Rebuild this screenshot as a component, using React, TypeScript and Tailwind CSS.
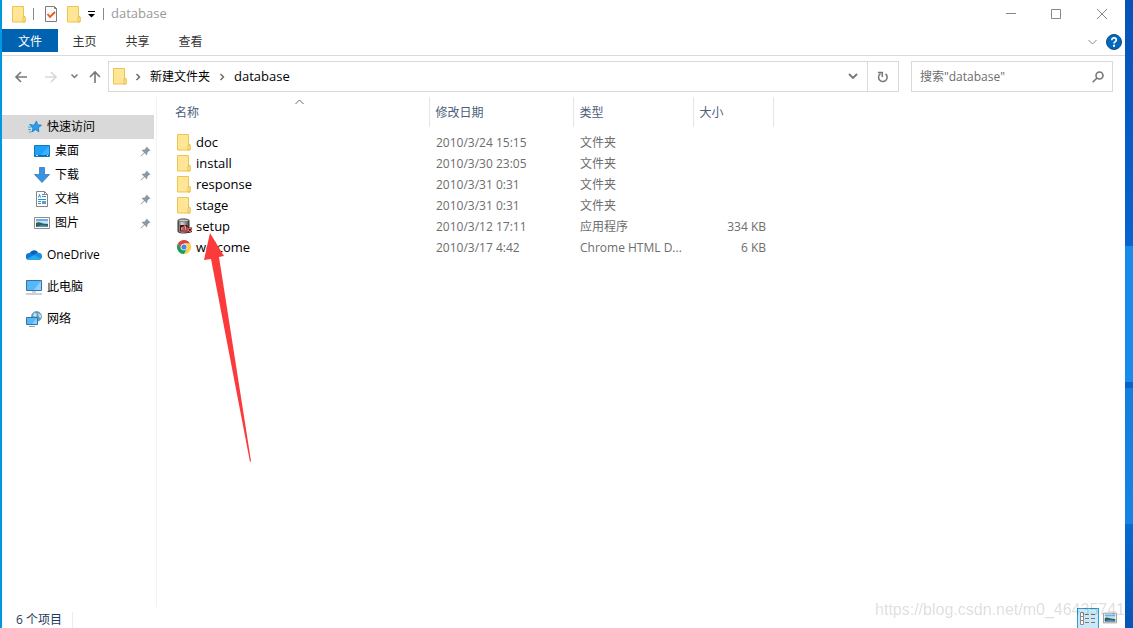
import type { ReactNode } from "react";

type FileKind = "folder" | "setup" | "chrome";

const files: { name: string; date: string; type: string; size: string; kind: FileKind }[] = [
  { name: "doc", date: "2010/3/24 15:15", type: "文件夹", size: "", kind: "folder" },
  { name: "install", date: "2010/3/30 23:05", type: "文件夹", size: "", kind: "folder" },
  { name: "response", date: "2010/3/31 0:31", type: "文件夹", size: "", kind: "folder" },
  { name: "stage", date: "2010/3/31 0:31", type: "文件夹", size: "", kind: "folder" },
  { name: "setup", date: "2010/3/12 17:11", type: "应用程序", size: "334 KB", kind: "setup" },
  { name: "welcome", date: "2010/3/17 4:42", type: "Chrome HTML D...", size: "6 KB", kind: "chrome" },
];

function FolderIcon() {
  return (
    <svg width="14" height="17" viewBox="0 0 14 17" className="shrink-0">
      <path d="M.5.5h11v10.500h1.500v5H.5z" fill="#ffe594" stroke="#ecc54e" />
      <path d="M1 1h10v14H1z" fill="#ffe697" />
      <path d="M11.500 10.500h1.500v5.500h-2v-4z" fill="#fff0b5" stroke="#e8bd3f" />
    </svg>
  );
}

function SetupIcon() {
  return (
    <svg width="16" height="16" viewBox="0 0 16 16" className="shrink-0">
      <defs>
        <linearGradient id="drum">
          <stop offset="0" stopColor="#555" />
          <stop offset=".35" stopColor="#ddd" />
          <stop offset="1" stopColor="#444" />
        </linearGradient>
      </defs>
      <path d="M1 2.500C1 .500 12 .500 12 2.500v11c0 2-11 2-11 0z" fill="url(#drum)" stroke="#333" />
      <ellipse cx="6.500" cy="2.500" rx="5" ry="1.300" fill="#c9c9c9" stroke="#555" strokeWidth=".6" />
      <path d="M3 7h7l1 2.500h4V14l-3 1-2-1H4l-1-1z" fill="#3a1719" />
      <path d="M4.500 12V9.500h1.300V12M7 12V8h1.500v4M10 12V9M4 13h7" fill="none" stroke="#ff8686" />
      <circle cx="13" cy="11.800" r="1.700" fill="none" stroke="#ff8686" />
    </svg>
  );
}

function ChromeIcon() {
  return (
    <svg width="14" height="14" viewBox="0 0 48 48" className="shrink-0">
      <path d="M24 0a24 24 0 0 1 20.800 12H24L13.600 30 3.200 12A24 24 0 0 1 24 0z" fill="#dc4437" />
      <path d="M44.800 12A24 24 0 0 1 24 48l10.400-18L24 12z" fill="#fdcf3f" />
      <path d="M3.200 12A24 24 0 0 0 24 48l10.400-18H13.600z" fill="#1b9d5a" />
      <circle cx="24" cy="24" r="11.500" fill="#f5f5f5" />
      <circle cx="24" cy="24" r="8.800" fill="#4285f4" />
    </svg>
  );
}

function StarIcon() {
  return (
    <svg width="16" height="16" viewBox="0 0 16 16">
      <path d="m9.500 2 1 3.700 4 .5-3.200 2.500.6 4.100-3.400-2.100-3.700 2.300 1.300-4.100L3.500 6.500l3.800-.6z" fill="#2b9eed" stroke="#1579c0" strokeWidth=".8" />
      <path d="M2 5.500h3M1 8h4M1 10.500h3M2 13h2" stroke="#3d9fdd" />
    </svg>
  );
}

function DesktopIcon() {
  return (
    <svg width="16" height="16" viewBox="0 0 16 16">
      <path d="M.5 2.500h15v11H.5z" fill="#1ba1f9" stroke="#1578bb" />
      <path d="M15 3v8L6 13z" fill="#3db1ff" />
      <path d="M1 12.500h14" stroke="#0b6dae" />
      <path d="M2 12.500h2M13 12.500h1" stroke="#bfe5ff" />
    </svg>
  );
}

function DownloadIcon() {
  return (
    <svg width="16" height="16" viewBox="0 0 16 16">
      <path d="M5.500.5h5v7h5L8 15.500.5 7.500h5z" fill="#3b93e0" stroke="#2d7cc4" strokeWidth=".8" />
    </svg>
  );
}

function DocumentIcon() {
  return (
    <svg width="16" height="16" viewBox="0 0 16 16">
      <path d="M2.500.5h8l3 3v12h-11z" fill="#fff" stroke="#858585" />
      <path d="M10.500.5v3h3" fill="none" stroke="#858585" />
      <path d="m4.500 6.500 1-3 1 3M8 3.500h2M8 5.500h4M4 8.500h8M4 10.500h3M4 12.500h3" fill="none" stroke="#2e8fd0" />
      <path d="M8 10h4v3H8z" fill="#5b9fc4" />
    </svg>
  );
}

function PictureIcon({ className = "" }: { className?: string }) {
  return (
    <svg width="16" height="16" viewBox="0 0 16 16" className={className}>
      <path d="M.5 2.500h15v11H.5z" fill="#fff" stroke="#8c8c8c" />
      <path d="M2 4h12v8H2z" fill="#c3e0f7" />
      <path d="M2 4h12v2H2z" fill="#6cb0e8" />
      <path d="M2 8c3-2 5 1 12 1v3H2z" fill="#2f5f57" />
      <path d="M2 12c4-2 7-2 12-1v1z" fill="#5d8fbd" />
    </svg>
  );
}

function CloudIcon() {
  return (
    <svg width="16" height="16" viewBox="0 0 16 16">
      <path d="M3.500 7.500a4.600 4.600 0 0 1 8.500-2L9 10 4 12z" fill="#0a5fb4" />
      <path d="M3.500 6c2 0 3 .8 5 2.200L3 13a3.500 3.500 0 0 1 .5-7z" fill="#0f78d4" />
      <path d="M12 5.800a3.600 3.600 0 0 1 .8 7.200L7.500 9c1-2 2.500-3.200 4.500-3.200z" fill="#1490df" />
      <path d="M.8 12 8 8l7 3.500c-.5 1-1.200 1.500-2.200 1.500H3.500c-1.200 0-2.200-.3-2.700-1z" fill="#29a9ea" />
    </svg>
  );
}

function ComputerIcon() {
  return (
    <svg width="16" height="16" viewBox="0 0 16 16">
      <path d="M.5 1.500h15v10H.5z" fill="#54b9fb" stroke="#3c7299" />
      <path d="M15 2v9H8z" fill="#8bd1ff" />
      <path d="M6 13h4M0 15h16" stroke="#93a6b5" />
    </svg>
  );
}

function NetworkIcon() {
  return (
    <svg width="16" height="16" viewBox="0 0 16 16">
      <circle cx="10.500" cy="5.500" r="5" fill="#5f9dbd" stroke="#4d84a2" strokeWidth=".6" />
      <path d="M8 1.500 11 3l-1 3-3-1zM12 2l3 2v3l-2-1z" fill="#c2e1ee" />
      <path d="M.5 6.500h11v7H.5z" fill="#54b9fb" stroke="#3c7299" />
      <path d="M11 7v6H6z" fill="#8bd1ff" />
      <path d="M3 15.500h6" stroke="#93a6b5" />
    </svg>
  );
}

function PinIcon() {
  return (
    <svg width="11" height="11" viewBox="0 0 11 11">
      <path d="M6.500.5 10.500 4.500 9 5 7.500 6.500 7 9.500 4.500 7 1 10.500.5 10 4 6.500 1.500 4 4.500 3.500 6 2z" fill="#8c98a3" />
    </svg>
  );
}

const quickAccess: { label: string; icon: ReactNode }[] = [
  { label: "桌面", icon: <DesktopIcon /> },
  { label: "下载", icon: <DownloadIcon /> },
  { label: "文档", icon: <DocumentIcon /> },
  { label: "图片", icon: <PictureIcon /> },
];

const places: { label: string; icon: ReactNode }[] = [
  { label: "OneDrive", icon: <CloudIcon /> },
  { label: "此电脑", icon: <ComputerIcon /> },
  { label: "网络", icon: <NetworkIcon /> },
];

function TitleBar() {
  return (
    <header className="flex h-7 items-center pl-2.5">
      <FolderIcon />
      <span className="ml-[7px] h-3 w-px bg-[#8a8a8a]" />
      <button aria-label="属性" className="ml-[11px]">
        <svg width="12" height="16" viewBox="0 0 12 16">
          <path d="M.5.500h9l2 2v13H.5z" fill="#fafafa" stroke="#7d7d7d" />
          <path d="M9.500.5v2h2" fill="none" stroke="#7d7d7d" />
          <path d="m2.500 8 2.500 3 5-5" fill="none" stroke="#e8561d" strokeWidth="1.800" />
        </svg>
      </button>
      <button aria-label="新建文件夹" className="ml-2.5">
        <FolderIcon />
      </button>
      <button aria-label="自定义快速访问工具栏" className="ml-1.5">
        <svg width="9" height="8" viewBox="0 0 9 8">
          <path d="M1 1.500h7" stroke="#000" />
          <path d="M1 4h7L4.500 7.500z" />
        </svg>
      </button>
      <span className="ml-[7px] h-3 w-px bg-[#8a8a8a]" />
      <h1 className="ml-[7px] text-[13px] text-[#999]">database</h1>
      <div className="ml-auto flex text-[#888]">
        <button aria-label="最小化" className="flex h-7 w-[45px] items-center justify-center">
          <svg width="10" height="10" stroke="currentColor"><path d="M0 4.500h10" /></svg>
        </button>
        <button aria-label="最大化" className="flex h-7 w-[45px] items-center justify-center">
          <svg width="10" height="10" fill="none" stroke="currentColor"><path d="M.5.500h9v9h-9z" /></svg>
        </button>
        <button aria-label="关闭" className="flex h-7 w-[47px] items-center justify-center">
          <svg width="10" height="10" stroke="currentColor"><path d="m0 0 10 10m0-10-10 10" /></svg>
        </button>
      </div>
    </header>
  );
}

function RibbonTabs() {
  return (
    <nav className="flex h-7 items-start border-b border-[#dadbdc] pt-px text-[#333]">
      <button className="h-[23px] w-14 bg-[#0063b1] pt-0.5 text-white">文件</button>
      <button className="h-[23px] w-[53px] pt-0.5">主页</button>
      <button className="h-[23px] w-[53px] pt-0.5">共享</button>
      <button className="h-[23px] w-[53px] pt-0.5">查看</button>
      <button aria-label="展开功能区" className="mt-2.5 ml-auto text-[#888]">
        <svg width="9" height="6" viewBox="0 0 9 6" fill="none" stroke="currentColor">
          <path d="m.5 1 4 4 4-4" />
        </svg>
      </button>
      <button aria-label="帮助" className="mt-[5px] mr-[3px] ml-[9px]">
        <svg width="16" height="16" viewBox="0 0 16 16">
          <circle cx="8" cy="8" r="7.500" fill="#0068bd" stroke="#0b4a86" />
          <path d="M5.800 6.200C5.800 3 10.300 3.400 10.300 6 10.300 7.600 8 7.600 8 9.600" fill="none" stroke="#fff" strokeWidth="1.700" />
          <path d="M7 10.800h2v1.900H7z" fill="#fff" />
        </svg>
      </button>
    </nav>
  );
}

function Crumb() {
  return (
    <svg width="5" height="8" fill="none" stroke="#666" strokeWidth="1.400" className="mx-[9px]">
      <path d="m.5 1 3 3-3 3" />
    </svg>
  );
}

function NavigationBar() {
  return (
    <div className="flex h-[41px] items-center px-3">
      <button aria-label="后退" className="text-[#777]">
        <svg width="14" height="12" fill="none" stroke="currentColor" strokeWidth="1.600">
          <path d="M13 6H2m5-5L2 6l5 5" />
        </svg>
      </button>
      <button aria-label="前进" disabled className="ml-4 text-[#d8d8d8]">
        <svg width="14" height="12" fill="none" stroke="currentColor" strokeWidth="1.600">
          <path d="M1 6h11M7 1l5 5-5 5" />
        </svg>
      </button>
      <button aria-label="最近浏览的位置" className="ml-[13px] text-[#777]">
        <svg width="7" height="5" fill="none" stroke="currentColor" strokeWidth="1.500">
          <path d="m.5.500 3 3 3-3" />
        </svg>
      </button>
      <button aria-label="向上" className="ml-[11px] text-[#777]">
        <svg width="12" height="14" fill="none" stroke="currentColor" strokeWidth="1.600">
          <path d="M6 13V2M1 7l5-5 5 5" />
        </svg>
      </button>
      <div className="ml-[7px] flex h-[31px] flex-1 items-center border border-[#d9d9d9] pl-1">
        <FolderIcon />
        <Crumb />
        <a href="#parent" className="pr-px text-black">新建文件夹</a>
        <Crumb />
        <a href="#database" className="text-[13px] text-black">database</a>
        <button aria-label="以前的位置" className="ml-auto flex h-full w-7 items-center justify-center text-[#777]">
          <svg width="10" height="7" fill="none" stroke="currentColor" strokeWidth="1.800">
            <path d="m1 1 4 4 4-4" />
          </svg>
        </button>
        <button aria-label="刷新" className="flex h-full w-[31px] items-center justify-center border-l border-[#d9d9d9] text-[#777]">
          <svg width="12" height="12" viewBox="0 0 12 12" fill="none" stroke="currentColor" strokeWidth="1.500">
            <path d="M3.500 2.600a4.300 4.300 0 1 0 5 .2" />
            <path d="M1 1.500h4.300V6" />
          </svg>
        </button>
      </div>
      <label className="ml-3 flex h-[31px] w-[202px] items-center border border-[#d9d9d9] px-2">
        <input
          aria-label="搜索"
          placeholder={'搜索"database"'}
          className="w-0 flex-1 outline-none placeholder:text-[#6d6d6d]"
        />
        <svg width="12" height="12" viewBox="0 0 12 12" fill="none" stroke="#777" strokeWidth="1.600">
          <circle cx="7.500" cy="4.500" r="3.500" />
          <path d="M5 7 .7 11.300" />
        </svg>
      </label>
    </div>
  );
}

function Sidebar() {
  return (
    <aside className="w-[155px] shrink-0 border-r border-[#f2f2f2] pt-[18px] text-black">
      <a href="#quick" className="mr-0.5 flex h-6 items-center gap-1 bg-[#d9d9d9] pl-[25px]">
        <StarIcon />
        快速访问
      </a>
      <ul>
        {quickAccess.map((item) => (
          <li key={item.label}>
            <a href="#quick" className="flex h-6 items-center gap-[5px] pr-[5px] pl-8">
              {item.icon}
              <span className="flex-1">{item.label}</span>
              <PinIcon />
            </a>
          </li>
        ))}
        {places.map((item) => (
          <li key={item.label} className="mt-2">
            <a href="#place" className="flex h-6 items-center gap-[5px] pl-6">
              {item.icon}
              {item.label}
            </a>
          </li>
        ))}
      </ul>
    </aside>
  );
}

function FileList() {
  return (
    <main className="relative flex-1">
      <table className="w-[616px] table-fixed text-left">
        <thead>
          <tr className="h-[30px] text-[#4c607a] [&>th]:border-r [&>th]:border-[#e5e5e5] [&>th]:pt-0.5 [&>th]:font-normal">
            <th className="relative w-[272px] pl-[18px]">
              名称
              <svg width="9" height="6" fill="none" stroke="#666" className="absolute top-0.5 left-[138px]">
                <path d="m.5 5 4-4 4 4" />
              </svg>
            </th>
            <th className="w-36 pl-1.5">修改日期</th>
            <th className="w-[120px] pl-1.5">类型</th>
            <th className="w-20 pl-1.5">大小</th>
          </tr>
        </thead>
        <tbody className="text-[#6d6d6d] before:block before:h-[5px]">
          {files.map((file) => (
            <tr key={file.name} className="h-[21px] whitespace-nowrap">
              <td className="pl-5">
                <div className="flex items-center text-[13px] text-black">
                  <span className="flex w-[19px] shrink-0">
                    {file.kind === "folder" && <FolderIcon />}
                    {file.kind === "setup" && <SetupIcon />}
                    {file.kind === "chrome" && <ChromeIcon />}
                  </span>
                  {file.name}
                </div>
              </td>
              <td className="pl-[7px]">{file.date}</td>
              <td className="pl-[7px]">{file.type}</td>
              <td className="pr-[7px] text-right">{file.size}</td>
            </tr>
          ))}
        </tbody>
      </table>
      {/* red pointer towards setup */}
      <svg width="50" height="232" className="pointer-events-none absolute top-[135px] left-[45px]">
        <path d="M8 1 22 24l-5 1 32 204-1 1L9 27l-7 1z" fill="#fb3b3b" />
      </svg>
    </main>
  );
}

function StatusBar() {
  return (
    <footer className="flex h-[21px] items-end pl-3.5 text-[#1e395b]">
      <span className="border-r border-[#ececec] pr-2.5 leading-4">6 个项目</span>
      <div className="relative ml-auto flex items-end pr-2">
        <button aria-label="详细信息" className="flex h-5 w-[22px] items-center justify-center border border-b-0 border-[#26a0da] bg-[#cbe8f6]">
          <svg width="18" height="14" viewBox="0 0 18 14" fill="none">
            <path d="M1.500.5h3v4h-3zM1.500 4.500h3v4h-3zM1.500 8.500h3v4h-3z" fill="#fff" stroke="#888" />
            <path d="M6 2.500h4M6 6.500h4M6 10.500h4M12 2.500h4M12 6.500h4M12 10.500h4" stroke="#777" />
          </svg>
        </button>
        <button aria-label="大缩略图" className="ml-1 pb-0.5">
          <PictureIcon className="h-4 w-3.5" />
        </button>
        <span className="pointer-events-none absolute right-0 bottom-1.5 font-['Liberation_Sans'] text-base text-black/15">
          https://blog.csdn.net/m0_46435741
        </span>
      </div>
    </footer>
  );
}

export default function App() {
  return (
    <div className="flex h-screen overflow-hidden bg-white font-['Open_Sans','Noto_Sans_CJK_SC',sans-serif] text-xs">
      {/* desktop edge left of the window */}
      <div className="w-0.5 shrink-0 bg-[#0098de]" />
      <div className="flex min-w-0 flex-1 flex-col">
        <TitleBar />
        <RibbonTabs />
        <NavigationBar />
        <div className="flex min-h-0 flex-1">
          <Sidebar />
          <FileList />
        </div>
        <StatusBar />
      </div>
      {/* wallpaper right of the window */}
      <div className="flex w-2 shrink-0 flex-col">
        <div className="h-[246px] bg-linear-to-b from-[#0752b8] to-[#0663cf]" />
        <div className="h-[136px] bg-linear-to-b from-[#168be9] to-[#178bea]" />
        <div className="h-[6px] bg-[#0762cb]" />
        <div className="h-[136px] bg-linear-to-b from-[#127fdd] to-[#1583e3]" />
        <div className="flex-1 bg-linear-to-b from-[#066ad1] to-[#0754b5]" />
      </div>
    </div>
  );
}
